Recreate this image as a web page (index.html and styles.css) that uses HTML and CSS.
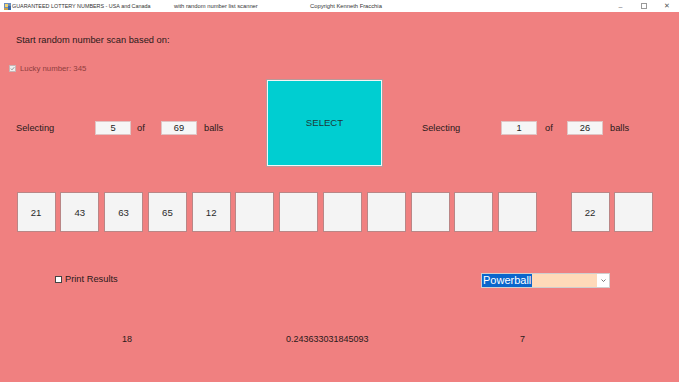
FILE: index.html
```html
<!DOCTYPE html>
<html lang="en">
<head>
    <meta charset="UTF-8">
    <meta name="viewport" content="width=device-width, initial-scale=1.0">
    <title>Guaranteed Lottery Numbers</title>
    <link rel="stylesheet" href="styles.css">
</head>
<body>
    <div class="window">
        <div class="titlebar">
            <svg class="app-icon" width="7" height="7" viewBox="0 0 7 7">
                <rect x="0" y="0" width="7" height="7" fill="#6a8fc0"/>
                <rect x="1" y="1" width="3" height="3" fill="#f2d36b"/>
                <rect x="4" y="3" width="3" height="4" fill="#3a6aa8"/>
                <rect x="0" y="5" width="4" height="2" fill="#c9a04a"/>
            </svg>
            <span class="title title-main">GUARANTEED LOTTERY NUMBERS - USA and Canada</span>
            <span class="title title-sub">with random number list scanner</span>
            <span class="title">Copyright Kenneth Fracchia</span>
            <div class="controls">
                <span class="ctrl">&#8211;</span>
                <span class="ctrl"><span class="max-box"></span></span>
                <span class="ctrl close">&#10005;</span>
            </div>
        </div>

        <div class="form">
            <p class="heading">Start random number scan based on:</p>

            <div class="lucky">
                <span class="check disabled">
                    <svg width="5" height="5" viewBox="0 0 5 5"><path d="M0.8 2.6 L2 3.8 L4.3 1.2" fill="none" stroke="#8c8c8c" stroke-width="0.9"/></svg>
                </span>
                Lucky number: 345
            </div>

            <div class="select-row">
                <div class="pick">
                    <span class="lbl">Selecting</span>
                    <span class="field">5</span>
                    <span class="of">of</span>
                    <span class="field">69</span>
                    <span class="balls">balls</span>
                </div>
                <button class="select-btn" type="button">SELECT</button>
                <div class="pick pick-bonus">
                    <span class="lbl">Selecting</span>
                    <span class="field">1</span>
                    <span class="of">of</span>
                    <span class="field">26</span>
                    <span class="balls">balls</span>
                </div>
            </div>

            <div class="ball-row">
                <div class="ball">21</div>
                <div class="ball">43</div>
                <div class="ball">63</div>
                <div class="ball">65</div>
                <div class="ball">12</div>
                <div class="ball"></div>
                <div class="ball"></div>
                <div class="ball"></div>
                <div class="ball"></div>
                <div class="ball"></div>
                <div class="ball"></div>
                <div class="ball"></div>
                <div class="ball bonus-first">22</div>
                <div class="ball"></div>
            </div>

            <div class="options-row">
                <label class="print">
                    <span class="check"></span>
                    Print Results
                </label>
                <div class="dropdown">
                    <span class="dropdown-value">Powerball</span>
                    <span class="dropdown-arrow">
                        <svg width="5" height="3" viewBox="0 0 5 3"><path d="M0.5 0.5 L2.5 2.5 L4.5 0.5" fill="none" stroke="#555" stroke-width="0.8"/></svg>
                    </span>
                </div>
            </div>

            <div class="stats-row">
                <span class="stat stat-count">18</span>
                <span class="stat stat-random">0.243633031845093</span>
                <span class="stat">7</span>
            </div>
        </div>
    </div>
</body>
</html>
```

FILE: styles.css
```css
body {
    margin: 0;
    padding: 0;
    font-family: 'Liberation Sans', Arial, sans-serif;
    background-color: #f08080;
}
.window {
    width: 679px;
    height: 382px;
    overflow: hidden;
    background-color: #f08080;
    color: #2a1a1a;
}
.titlebar {
    display: flex;
    align-items: center;
    height: 12px;
    background-color: #fff;
    padding-left: 4px;
}
.app-icon {
    width: 7px;
    height: 7px;
    margin-right: 1px;
}
.title {
    font-size: 5.8px;
    color: #333;
    white-space: nowrap;
}
.title-main {
    width: 162px;
    font-size: 5.4px;
}
.title-sub {
    width: 136px;
}
.controls {
    display: flex;
    margin-left: auto;
    padding-right: 1px;
}
.ctrl {
    width: 23px;
    text-align: center;
    font-size: 7px;
    color: #777;
    display: flex;
    justify-content: center;
    align-items: center;
}
.max-box {
    width: 4px;
    height: 4px;
    border: 1px solid #999;
}
.close {
    color: #555;
}
.form {
    font-size: 9.3px;
}
.heading {
    margin: 22px 0 0 16px;
    height: 12px;
    line-height: 12px;
}
.lucky {
    display: flex;
    align-items: center;
    margin: 16px 0 0 9px;
    height: 12px;
    font-size: 7.8px;
    color: #8f3d3d;
}
.check {
    width: 5px;
    height: 5px;
    border: 1px solid #555;
    background-color: #fff;
    margin-right: 4px;
    display: flex;
    align-items: center;
    justify-content: center;
}
.check.disabled {
    border-color: #c8b4b4;
    background-color: #eee;
}
.select-row {
    display: flex;
    align-items: flex-start;
    margin-top: 6px;
    height: 86px;
}
.pick {
    display: flex;
    align-items: center;
    height: 14px;
    margin-top: 41px;
    margin-left: 16px;
    width: 251px;
}
.pick-bonus {
    margin-left: 40px;
    width: auto;
}
.lbl {
    width: 79px;
}
.field {
    box-sizing: border-box;
    width: 36px;
    height: 14px;
    line-height: 13px;
    background-color: #f6f6f6;
    border: 1px solid #e0c4c4;
    text-align: center;
    color: #222;
}
.of {
    width: 24px;
    margin-left: 6px;
}
.pick-bonus .of {
    margin-left: 8px;
    width: 22px;
}
.balls {
    margin-left: 7px;
}
.select-btn {
    box-sizing: border-box;
    width: 115px;
    height: 86px;
    margin: 0;
    padding: 0 0 1px;
    background-color: #00ced1;
    border: 1px solid #f4f4f4;
    box-shadow: 0 0 0 1px #b99a9a;
    font-family: 'Liberation Sans', Arial, sans-serif;
    font-size: 9.6px;
    color: #1c3a3a;
}
.ball-row {
    display: flex;
    gap: 4.8px;
    margin: 26px 0 0 16.5px;
}
.ball {
    box-sizing: border-box;
    width: 39px;
    height: 40px;
    background-color: #f4f4f4;
    border: 1px solid #b98686;
    display: flex;
    align-items: center;
    justify-content: center;
    font-size: 9.6px;
    color: #2a2a2a;
}
.bonus-first {
    margin-left: 28.5px;
}
.options-row {
    display: flex;
    align-items: center;
    margin-top: 41px;
    height: 15px;
}
.print {
    display: flex;
    align-items: center;
    width: 481px;
    padding-left: 55px;
    box-sizing: border-box;
    margin-top: -3px;
}
.print .check {
    border-color: #444;
    margin-right: 3px;
}
.dropdown {
    box-sizing: border-box;
    display: flex;
    align-items: center;
    width: 129px;
    height: 15px;
    background-color: #ffdab9;
    border: 1px solid #cfcfcf;
}
.dropdown-value {
    background-color: #0a66cc;
    color: #fff;
    font-size: 11px;
    line-height: 13px;
    padding: 0 1px;
}
.dropdown-arrow {
    margin-left: auto;
    width: 12px;
    height: 13px;
    background-color: #fff;
    display: flex;
    align-items: center;
    justify-content: center;
}
.stats-row {
    display: flex;
    margin: 45px 0 0 122px;
    height: 12px;
    line-height: 12px;
    font-size: 9px;
}
.stat-count {
    width: 164px;
}
.stat-random {
    width: 234px;
}
```
